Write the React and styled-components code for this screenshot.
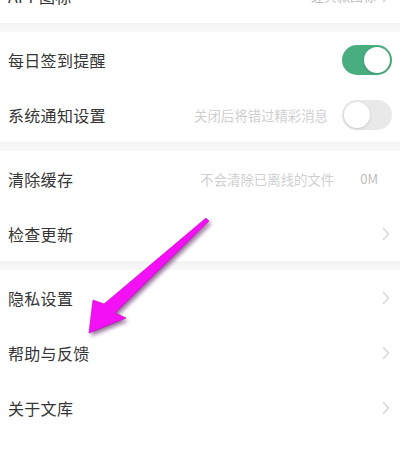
import React from "react";
import styled, { createGlobalStyle } from "styled-components";

const Global = createGlobalStyle`
  html, body { margin: 0; padding: 0; background: #fff; overflow: hidden; }
  body { font-family: "Noto Sans CJK SC", "Noto Sans", sans-serif; }
`;

const Page = styled.div`
  position: relative;
  width: 400px;
  height: 454px;
  overflow: hidden;
  background: #fff;
`;

const List = styled.div`
  display: flex;
  flex-direction: column;
  margin-top: -32px;
`;

const Section = styled.div`
  display: flex;
  flex-direction: column;
  background: #fff;
`;

const Band = styled.div`
  height: 9px;
  background: linear-gradient(#f3f3f3, #f8f8f8);
`;

const Row = styled.div`
  height: 55px;
  display: flex;
  align-items: center;
  padding: 0 8px 0 8px;
  box-sizing: border-box;
`;

const Label = styled.div`
  flex: 1;
  font-size: 16px;
  color: #353535;
  letter-spacing: 0.3px;
`;

const Hint = styled.div`
  font-size: 13.4px;
  color: #cfcfcf;
  margin-right: ${(p) => p.$gap || 14}px;
`;

const Value = styled.div`
  font-size: 13px;
  color: #bdbdbd;
  margin-right: ${(p) => p.$gap || 14}px;
`;

const Toggle = styled.div`
  position: relative;
  width: 50px;
  height: 30px;
  border-radius: 15px;
  background: ${(p) => (p.$on ? "#48ad7f" : "#e9e9e9")};
  box-sizing: border-box;
  flex-shrink: 0;
  &::after {
    content: "";
    position: absolute;
    top: 2px;
    ${(p) => (p.$on ? "right: 2px;" : "left: 2px;")}
    width: 26px;
    height: 26px;
    border-radius: 50%;
    background: #fff;
    box-shadow: 0 1px 3px rgba(0, 0, 0, 0.15);
  }
`;

const Chevron = styled.svg`
  width: 8px;
  height: 14px;
  flex-shrink: 0;
  margin-right: 2px;
`;

const ArrowLayer = styled.svg`
  position: absolute;
  left: 0;
  top: 0;
  width: 400px;
  height: 454px;
  pointer-events: none;
`;

const Arrow = () => (
  <Chevron viewBox="0 0 8 14">
    <path d="M1.5 1.5 L6.5 7 L1.5 12.5" fill="none" stroke="#d6d6d6" strokeWidth="1.4" strokeLinecap="round" strokeLinejoin="round" />
  </Chevron>
);

export default function App() {
  const arrowPts = "206,218 209,221 115,313 126,318 89,333 93,300 104,304";
  return (
    <Page>
      <Global />
      <List>
        <Section>
          <Row>
            <Label>APP图标</Label>
            <Value $gap={6}>经典款图标</Value>
            <Arrow />
          </Row>
        </Section>
        <Band />
        <Section>
          <Row>
            <Label>每日签到提醒</Label>
            <Toggle $on />
          </Row>
          <Row>
            <Label>系统通知设置</Label>
            <Hint>关闭后将错过精彩消息</Hint>
            <Toggle />
          </Row>
        </Section>
        <Band />
        <Section>
          <Row>
            <Label>清除缓存</Label>
            <Hint $gap={26}>不会清除已离线的文件</Hint>
            <Value>0M</Value>
          </Row>
          <Row>
            <Label>检查更新</Label>
            <Arrow />
          </Row>
        </Section>
        <Band />
        <Section>
          <Row>
            <Label>隐私设置</Label>
            <Arrow />
          </Row>
          <Row>
            <Label>帮助与反馈</Label>
            <Arrow />
          </Row>
          <Row>
            <Label>关于文库</Label>
            <Arrow />
          </Row>
        </Section>
      </List>
      <ArrowLayer viewBox="0 0 400 454">
        <defs>
          <filter id="blur" x="-20%" y="-20%" width="140%" height="140%">
            <feGaussianBlur stdDeviation="2" />
          </filter>
        </defs>
        <polygon points={arrowPts} fill="#4a1050" opacity="0.6" transform="translate(2,3)" filter="url(#blur)" />
        <polygon points={arrowPts} fill="#f410f4" stroke="#c000c0" strokeWidth="0.6" strokeLinejoin="round" />
      </ArrowLayer>
    </Page>
  );
}
